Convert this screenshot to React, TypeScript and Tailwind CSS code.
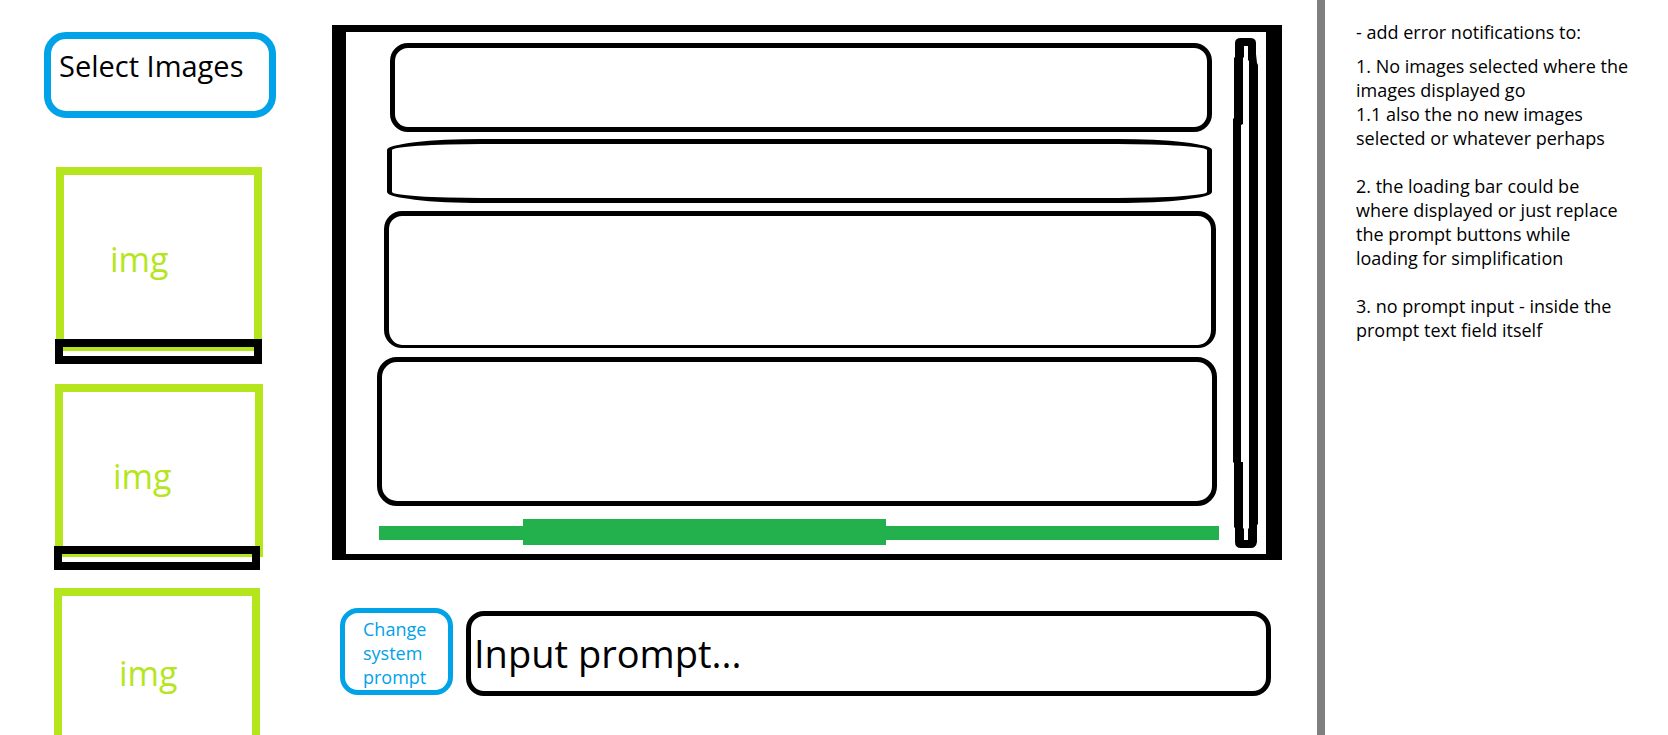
import React from "react";

const thumbnails = [
  { frame: "ml-3 w-[206px] h-[184px]", strip: "ml-[11px] w-[207px] h-[25px] -mt-3", label: "pl-[46px] pt-[62px]", gap: "mt-[49px]" },
  { frame: "ml-[11px] w-[208px] h-[173px]", strip: "ml-[10px] w-[206px] h-6 -mt-[11px]", label: "pl-[50px] pt-[62px]", gap: "mt-5" },
  { frame: "ml-[10px] w-[206px] h-[184px]", strip: "ml-[10px] w-[206px] h-6 -mt-3", label: "pl-[57px] pt-[55px]", gap: "mt-[18px]" },
];

const messages = [
  "ml-[13px] mr-[7px] h-[89px] rounded-[18px] border-5",
  "ml-[10px] mr-[7px] mt-[7px] h-16 rounded-[95px/11px] border-5",
  "ml-[7px] mr-[3px] mt-2 h-[137px] rounded-[18px] border-5 border-b-3",
  "mr-[2px] mt-[9px] h-[149px] rounded-[20px] border-5",
];

function Thumbnail({ item }: { item: (typeof thumbnails)[number] }) {
  return (
    <figure className={`${item.gap} shrink-0`}>
      <div className={`${item.frame} ${item.label} border-8 border-[#b5e61d] text-[34px] leading-[44px] text-[#b5e61d]`}>
        img
      </div>
      <div className={`${item.strip} relative border-8 border-black`} />
    </figure>
  );
}

function Sidebar() {
  return (
    <aside className="flex w-[332px] shrink-0 flex-col overflow-hidden pl-11 pt-8">
      <button
        type="button"
        className="flex h-[86px] w-[232px] shrink-0 items-start rounded-[22px] border-7 border-[#00a2e8] pl-2 pt-2 text-[29px] leading-[38px]"
      >
        Select Images
      </button>
      {thumbnails.map((item, i) => (
        <Thumbnail key={i} item={item} />
      ))}
    </aside>
  );
}

function LoadingBar() {
  return (
    <div role="progressbar" aria-label="Loading" className="ml-[2px] mt-[13px] flex h-[26px] items-start">
      <div className="mt-[7px] h-[14px] w-36 bg-[#22b14c]" />
      <div className="h-full w-[363px] bg-[#22b14c]" />
      <div className="mt-[7px] h-[14px] flex-1 bg-[#22b14c]" />
    </div>
  );
}

function ScrollTrack() {
  return (
    <svg viewBox="0 0 25 510" className="mt-[6px] h-[510px] w-[25px] shrink-0" aria-hidden="true">
      <path
        fillRule="evenodd"
        d="M2 5 Q2 0 8 0 H17 Q23 0 23 5 V16 L24 25 L25 27 V486 L24 487 V504 Q23 510 18 510 H8 Q2 510 2 504 V490 L1 489 V425 L0 424 V81 L1 80 V20 L2 19 Z M11 8 V19 L10 20 V86 L8 87 V424 H10 V490 L11 491 V502 H15 V491 L16 490 V23 L15 22 V8 Z"
      />
    </svg>
  );
}

function Conversation() {
  return (
    <section className="flex h-[535px] border-x-[14px] border-r-16 border-t-7 border-b-6 border-black pl-[31px] pr-2">
      <div className="min-w-0 flex-1 pt-[11px]">
        {messages.map((shape) => (
          <div key={shape} className={`${shape} border-black`} />
        ))}
        <LoadingBar />
      </div>
      <div className="ml-[14px] flex">
        <ScrollTrack />
      </div>
    </section>
  );
}

function PromptBar() {
  return (
    <form className="mt-12 flex items-start pl-2 pr-[11px]" onSubmit={(e) => e.preventDefault()}>
      <button
        type="button"
        className="h-[87px] w-[113px] shrink-0 rounded-[18px] border-5 border-[#00a2e8] pl-[18px] pt-[2px] text-left text-[18px] leading-6 text-[#00a2e8]"
      >
        Change
        <br />
        system
        <br />
        prompt
      </button>
      <input
        type="text"
        aria-label="Prompt"
        placeholder="Input prompt..."
        className="ml-[13px] mt-[3px] h-[85px] min-w-0 flex-1 rounded-[18px] border-5 border-black pb-[2px] pl-[3px] text-[38px] text-black outline-none placeholder:text-black placeholder:opacity-100"
      />
    </form>
  );
}

function Notes() {
  return (
    <aside className="w-[351px] shrink-0 border-l-8 border-[#7f7f7f] pl-[31px] pr-6 pt-5 text-[18px] leading-6">
      <p>- add error notifications to:</p>
      <p className="mt-[10px]">
        1. No images selected where the
        <br />
        images displayed go
        <br />
        1.1 also the no new images
        <br />
        selected or whatever perhaps
      </p>
      <p className="mt-6">
        2. the loading bar could be
        <br />
        where displayed or just replace
        <br />
        the prompt buttons while
        <br />
        loading for simplification
      </p>
      <p className="mt-6">
        3. no prompt input - inside the
        <br />
        prompt text field itself
      </p>
    </aside>
  );
}

export default function App() {
  return (
    <div className="flex h-screen overflow-hidden bg-white font-['Open_Sans','Noto_Sans',sans-serif] text-black">
      <Sidebar />
      <main className="min-w-0 flex-1 pr-[35px] pt-[25px]">
        <Conversation />
        <PromptBar />
      </main>
      <Notes />
    </div>
  );
}
